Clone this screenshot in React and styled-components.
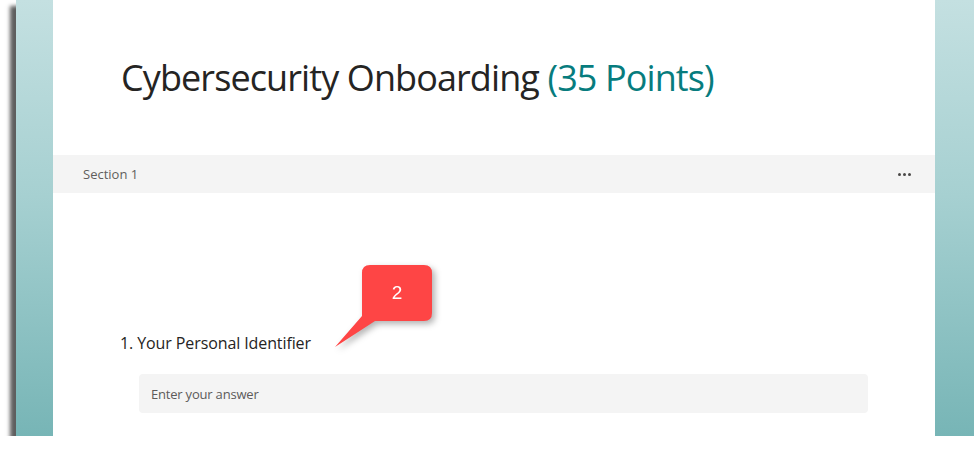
import React from 'react'
import styled, { createGlobalStyle } from 'styled-components'

const GlobalStyle = createGlobalStyle`
  html, body {
    margin: 0;
    padding: 0;
    background: #fff;
    overflow: hidden;
  }
  body {
    font-family: "Open Sans", "Noto Sans", sans-serif;
  }
`

const Frame = styled.div`
  margin-left: 16px;
  height: 436px;
  padding: 0 39px 0 37px;
  background: linear-gradient(180deg, #c4e0e1 0%, #a6d0d1 45%, #77b5b6 100%);
  box-shadow: -6px 6px 4px rgba(40, 40, 40, 0.75);
  display: flex;
`

const Card = styled.main`
  position: relative;
  flex: 1;
  background: #fff;
  display: flex;
  flex-direction: column;
`

const Header = styled.header`
  height: 155px;
  padding-left: 68px;
  box-sizing: border-box;
  display: flex;
  align-items: flex-start;
`

const Title = styled.h1`
  margin: 52px 0 0;
  font-size: 36px;
  font-weight: 400;
  line-height: 52px;
  letter-spacing: -0.9px;
  color: #252423;
  white-space: nowrap;
`

const Points = styled.span`
  color: #077c7e;
`

const SectionBar = styled.div`
  height: 38px;
  background: #f4f4f4;
  display: flex;
  align-items: center;
  justify-content: space-between;
  padding: 0 24px 0 30px;
`

const SectionName = styled.span`
  font-size: 13px;
  color: #605e5c;
`

const Dots = styled.span`
  display: flex;
  gap: 2px;
  span {
    width: 3px;
    height: 3px;
    border-radius: 50%;
    background: #4a4847;
  }
`

const Question = styled.section`
  padding: 140px 67px 0 67px;
  display: flex;
  flex-direction: column;
`

const Label = styled.div`
  font-size: 16px;
  color: #252423;
  line-height: 20px;
  letter-spacing: -0.1px;
`

const AnswerBox = styled.div`
  margin: 21px 0 0 19px;
  height: 39px;
  background: #f4f4f4;
  border-radius: 4px;
  display: flex;
  align-items: center;
  padding-left: 12px;
`

const Placeholder = styled.span`
  font-size: 13px;
  color: #5c5b5a;
  letter-spacing: -0.2px;
`

const Callout = styled.div`
  position: absolute;
  left: 280px;
  top: 262px;
  width: 110px;
  height: 90px;
  filter: drop-shadow(3px 3px 3px rgba(0, 0, 0, 0.3));
  svg {
    display: block;
  }
`

const CalloutNumber = styled.span`
  position: absolute;
  left: 29px;
  top: 3px;
  width: 70px;
  height: 56px;
  display: flex;
  align-items: center;
  justify-content: center;
  font-family: "Liberation Sans", Arial, sans-serif;
  font-size: 19px;
  color: #fff;
`

export default function App() {
  return (
    <>
      <GlobalStyle />
      <Frame>
        <Card>
          <Header>
            <Title>
              Cybersecurity Onboarding <Points>(35 Points)</Points>
            </Title>
          </Header>
          <SectionBar>
            <SectionName>Section 1</SectionName>
            <Dots>
              <span />
              <span />
              <span />
            </Dots>
          </SectionBar>
          <Question>
            <Label>1. Your Personal Identifier</Label>
            <AnswerBox>
              <Placeholder>Enter your answer</Placeholder>
            </AnswerBox>
          </Question>
          <Callout>
            <svg width="110" height="90" viewBox="0 0 110 90">
              <path
                d="M37 3 H91 Q99 3 99 11 V51 Q99 59 91 59 H42 L2 85 L29 54 V11 Q29 3 37 3 Z"
                fill="#fe4545"
              />
            </svg>
            <CalloutNumber>2</CalloutNumber>
          </Callout>
        </Card>
      </Frame>
    </>
  )
}
